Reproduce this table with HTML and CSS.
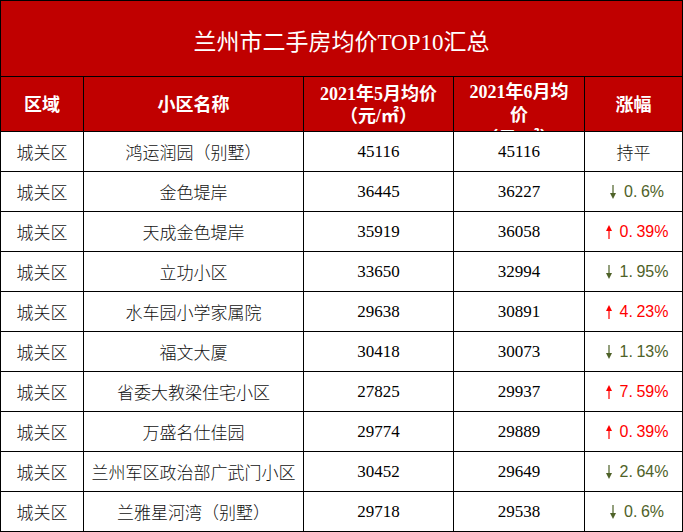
FILE: index.html
```
<!DOCTYPE html>
<html lang="zh-CN">
<head>
<meta charset="utf-8">
<title>兰州市二手房均价TOP10汇总</title>
<link rel="stylesheet" href="styles.css">
</head>
<body>
<div class="sheet">
  <div class="cell title">兰州市二手房均价TOP10汇总</div>

  <div class="cell hd">区域</div>
  <div class="cell hd">小区名称</div>
  <div class="cell hd">2021年5月均价<br>（元/㎡）</div>
  <div class="cell hd top">2021年6月均<br>价<br>（元/㎡）</div>
  <div class="cell hd">涨幅</div>

  <div class="cell cn">城关区</div><div class="cell cn">鸿运润园（别墅）</div><div class="cell num">45116</div><div class="cell num">45116</div><div class="cell cn">持平</div>

  <div class="cell cn">城关区</div><div class="cell cn">金色堤岸</div><div class="cell num">36445</div><div class="cell num">36227</div>
  <div class="cell pct down"><svg class="arr" viewBox="0 0 6 14"><polygon points="0,8 6,8 3,14"/><rect x="2.4" y="0" width="1.2" height="9"/></svg><span>0<i>.</i>6%</span></div>

  <div class="cell cn">城关区</div><div class="cell cn">天成金色堤岸</div><div class="cell num">35919</div><div class="cell num">36058</div>
  <div class="cell pct up"><svg class="arr" viewBox="0 0 6 14"><polygon points="0,6 6,6 3,0"/><rect x="2.4" y="5" width="1.2" height="9"/></svg><span>0<i>.</i>39%</span></div>

  <div class="cell cn">城关区</div><div class="cell cn">立功小区</div><div class="cell num">33650</div><div class="cell num">32994</div>
  <div class="cell pct down"><svg class="arr" viewBox="0 0 6 14"><polygon points="0,8 6,8 3,14"/><rect x="2.4" y="0" width="1.2" height="9"/></svg><span>1<i>.</i>95%</span></div>

  <div class="cell cn">城关区</div><div class="cell cn">水车园小学家属院</div><div class="cell num">29638</div><div class="cell num">30891</div>
  <div class="cell pct up"><svg class="arr" viewBox="0 0 6 14"><polygon points="0,6 6,6 3,0"/><rect x="2.4" y="5" width="1.2" height="9"/></svg><span>4<i>.</i>23%</span></div>

  <div class="cell cn">城关区</div><div class="cell cn">福文大厦</div><div class="cell num">30418</div><div class="cell num">30073</div>
  <div class="cell pct down"><svg class="arr" viewBox="0 0 6 14"><polygon points="0,8 6,8 3,14"/><rect x="2.4" y="0" width="1.2" height="9"/></svg><span>1<i>.</i>13%</span></div>

  <div class="cell cn">城关区</div><div class="cell cn">省委大教梁住宅小区</div><div class="cell num">27825</div><div class="cell num">29937</div>
  <div class="cell pct up"><svg class="arr" viewBox="0 0 6 14"><polygon points="0,6 6,6 3,0"/><rect x="2.4" y="5" width="1.2" height="9"/></svg><span>7<i>.</i>59%</span></div>

  <div class="cell cn">城关区</div><div class="cell cn">万盛名仕佳园</div><div class="cell num">29774</div><div class="cell num">29889</div>
  <div class="cell pct up"><svg class="arr" viewBox="0 0 6 14"><polygon points="0,6 6,6 3,0"/><rect x="2.4" y="5" width="1.2" height="9"/></svg><span>0<i>.</i>39%</span></div>

  <div class="cell cn">城关区</div><div class="cell cn">兰州军区政治部广武门小区</div><div class="cell num">30452</div><div class="cell num">29649</div>
  <div class="cell pct down"><svg class="arr" viewBox="0 0 6 14"><polygon points="0,8 6,8 3,14"/><rect x="2.4" y="0" width="1.2" height="9"/></svg><span>2<i>.</i>64%</span></div>

  <div class="cell cn">城关区</div><div class="cell cn">兰雅星河湾（别墅）</div><div class="cell num">29718</div><div class="cell num">29538</div>
  <div class="cell pct down"><svg class="arr" viewBox="0 0 6 14"><polygon points="0,8 6,8 3,14"/><rect x="2.4" y="0" width="1.2" height="9"/></svg><span>0<i>.</i>6%</span></div>
</div>
</body>
</html>
```

FILE: styles.css
```
html, body {
  margin: 0;
  padding: 0;
  background: #ffffff;
}

.sheet {
  display: grid;
  grid-template-columns: 83px 220px 150px 131px 98px;
  grid-template-rows: 76px 55px repeat(10, 40px);
  width: 683px;
  box-sizing: border-box;
  border-top: 1px solid #000;
  border-left: 1px solid #000;
  font-family: "Liberation Serif", "Noto Sans CJK SC", serif;
  color: #000;
}

.cell {
  box-sizing: border-box;
  border-right: 1px solid #000;
  border-bottom: 1px solid #000;
  display: flex;
  align-items: center;
  justify-content: center;
  text-align: center;
  overflow: hidden;
  white-space: nowrap;
}

.title {
  grid-column: 1 / -1;
  background: #c00000;
  color: #ffffff;
  font-size: 23px;
  padding-top: 3px;
  font-weight: 400;
}

.hd {
  background: #c00000;
  color: #ffffff;
  font-size: 18px;
  font-weight: 700;
  line-height: 22px;
  padding-top: 2px;
}

.hd.top {
  align-items: flex-start;
  padding-top: 4px;
  line-height: 23px;
}

.cn {
  font-family: "Noto Sans CJK SC", sans-serif;
  font-weight: 300;
  font-size: 17px;
  color: #111;
}

.num {
  font-size: 17px;
}

.pct {
  font-family: "Liberation Sans", "Noto Sans CJK SC", sans-serif;
  font-size: 16px;
  padding-left: 7px;
}

.pct i {
  font-style: normal;
  display: inline-block;
  width: 8px;
  text-align: left;
}

.arr {
  width: 6px;
  height: 14px;
  margin-right: 8px;
  fill: currentColor;
}

.up {
  color: #ff0000;
}

.down {
  color: #4f6228;
}
```
